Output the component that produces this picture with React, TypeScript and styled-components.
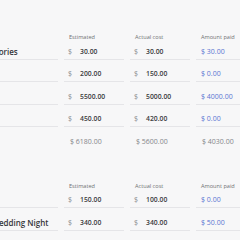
import React from "react";
import styled, { createGlobalStyle } from "styled-components";

const Global = createGlobalStyle`
  html, body { margin: 0; padding: 0; background: #f7f7f8; }
  body { font-family: "Open Sans", "Noto Sans", sans-serif; }
`;

const Page = styled.div`
  width: 240px;
  height: 240px;
  overflow: hidden;
  padding-top: 32px;
  box-sizing: border-box;
`;

const Sheet = styled.div`
  margin-left: -27px;
  display: flex;
  flex-direction: column;
  gap: 31px;
`;

const Section = styled.div`
  display: flex;
  flex-direction: column;
`;

const Row = styled.div`
  display: grid;
  grid-template-columns: 85px 60px 60px 60px;
  column-gap: 6px;
`;

const HeadCell = styled.div`
  font-size: 5.6px;
  line-height: 10px;
  color: #6f7073;
  padding-left: 5px;
  white-space: nowrap;
`;

const Cell = styled.div<{ $first?: boolean; $line?: boolean }>`
  padding-top: ${(p) => (p.$first ? "2.5px" : "7.6px")};
  height: 14px;
  line-height: 14px;
  border-bottom: ${(p) => (p.$line === false ? "1px solid transparent" : "1px solid #e5e5e8")};
  display: flex;
  align-items: center;
  white-space: nowrap;
  overflow: hidden;
`;

const Name = styled.span`
  font-size: 8px;
  font-weight: 600;
  color: #35363a;
`;

const Dollar = styled.span`
  font-size: 7px;
  color: #8b8c90;
  width: 16px;
  padding-left: 4px;
  box-sizing: border-box;
`;

const Value = styled.span`
  font-size: 6.8px;
  font-weight: 600;
  color: #3a3b40;
`;

const Paid = styled.span`
  font-size: 7px;
  color: #5a74d2;
  padding-left: 5px;
`;

const Total = styled.span`
  font-size: 7px;
  color: #85868a;
  padding-left: 6px;
`;

type Item = { name: string; est: string; act: string; paid: string };

const sections: { items: Item[]; totals?: [string, string, string] }[] = [
  {
    items: [
      { name: "Accessories", est: "30.00", act: "30.00", paid: "30.00" },
      { name: "", est: "200.00", act: "150.00", paid: "0.00" },
      { name: "", est: "5500.00", act: "5000.00", paid: "4000.00" },
      { name: "", est: "450.00", act: "420.00", paid: "0.00" },
    ],
    totals: ["6180.00", "5600.00", "4030.00"],
  },
  {
    items: [
      { name: "", est: "150.00", act: "100.00", paid: "0.00" },
      { name: "Villa Wedding Night", est: "340.00", act: "340.00", paid: "50.00" },
    ],
  },
];

export default function App() {
  return (
    <>
      <Global />
      <Page>
        <Sheet>
          {sections.map((s, si) => (
            <Section key={si}>
              <Row>
                <HeadCell />
                <HeadCell>Estimated</HeadCell>
                <HeadCell>Actual cost</HeadCell>
                <HeadCell>Amount paid</HeadCell>
              </Row>
              {s.items.map((it, i) => (
                <Row key={i}>
                  <Cell $first={i === 0}>
                    {it.name && <Name>{it.name}</Name>}
                  </Cell>
                  <Cell $first={i === 0}>
                    <Dollar>$</Dollar>
                    <Value>{it.est}</Value>
                  </Cell>
                  <Cell $first={i === 0}>
                    <Dollar>$</Dollar>
                    <Value>{it.act}</Value>
                  </Cell>
                  <Cell $first={i === 0}>
                    <Paid>$ {it.paid}</Paid>
                  </Cell>
                </Row>
              ))}
              {s.totals && (
                <Row>
                  <Cell $line={false} />
                  <Cell $line={false}>
                    <Total>$ {s.totals[0]}</Total>
                  </Cell>
                  <Cell $line={false}>
                    <Total>$ {s.totals[1]}</Total>
                  </Cell>
                  <Cell $line={false}>
                    <Total>$ {s.totals[2]}</Total>
                  </Cell>
                </Row>
              )}
            </Section>
          ))}
        </Sheet>
      </Page>
    </>
  );
}
